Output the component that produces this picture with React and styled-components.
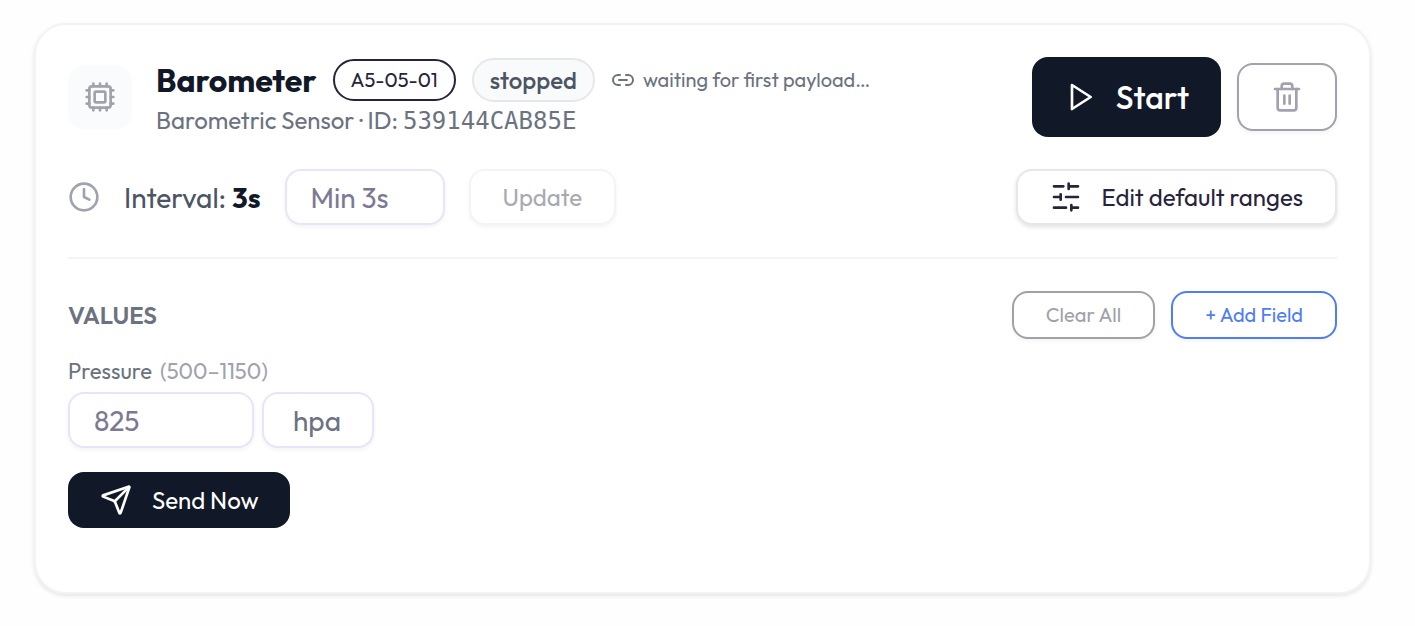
import { useState } from "react";
import styled, { createGlobalStyle } from "styled-components";
import { Cpu, Link2, Send, Trash2 } from "lucide-react";

const GlobalStyle = createGlobalStyle`
  * {
    box-sizing: border-box;
  }
  body {
    margin: 0;
    background-color: #fefefe;
    color: #111827;
    font-family: Outfit, Lato, sans-serif;
  }
  button,
  input,
  select {
    font-family: inherit;
    margin: 0;
  }
`;

function PlayIcon() {
  return (
    <Stroke viewBox="0 0 24 24">
      <polygon points="6 3 20 12 6 21 6 3" />
    </Stroke>
  );
}

function ClockIcon() {
  return (
    <Stroke viewBox="0 0 24 24">
      <circle cx="12" cy="12" r="10" />
      <polyline points="12 6 12 12 16 14" />
    </Stroke>
  );
}

function SlidersIcon() {
  return (
    <Stroke viewBox="0 0 24 24">
      <path d="M21 4h-7M10 4H3M21 12h-9M8 12H3M21 20h-5M12 20H3M14 2v4M8 10v4M16 18v4" />
    </Stroke>
  );
}

export default function App() {
  const [interval, setIntervalValue] = useState("");
  const [pressure, setPressure] = useState("");
  const [unit, setUnit] = useState("hpa");

  return (
    <>
      <GlobalStyle />
      <Card>
        <Row>
          <Device>
            <Tile>
              <Cpu size={32} />
            </Tile>
            <div>
              <TitleRow>
                <h2>Barometer</h2>
                <Badge>A5-05-01</Badge>
                <Status>stopped</Status>
                <Waiting>
                  <Link2 size={24} />
                  waiting for first payload…
                </Waiting>
              </TitleRow>
              <Subtitle>
                Barometric Sensor · ID: <code>539144CAB85E</code>
              </Subtitle>
            </div>
          </Device>
          <Actions>
            <StartButton type="button">
              <PlayIcon />
              Start
            </StartButton>
            <DeleteButton type="button" aria-label="Delete">
              <Trash2 size={32} />
            </DeleteButton>
          </Actions>
        </Row>
        <Row>
          <Interval>
            <ClockIcon />
            <label htmlFor="interval">
              Interval: <b>3s</b>
            </label>
            <TextInput
              id="interval"
              $width="160px"
              placeholder="Min 3s"
              value={interval}
              onChange={(e) => setIntervalValue(e.target.value)}
            />
            <UpdateButton type="button" disabled>
              Update
            </UpdateButton>
          </Interval>
          <EditButton type="button">
            <SlidersIcon />
            Edit default ranges
          </EditButton>
        </Row>
        <Divider />
        <Row>
          <h3>VALUES</h3>
          <Actions>
            <SmallButton type="button" $color="#a1a1aa">
              Clear All
            </SmallButton>
            <SmallButton type="button" $color="#4f7df3">
              + Add Field
            </SmallButton>
          </Actions>
        </Row>
        <Field>
          <label htmlFor="pressure">
            Pressure <span>(500–1150)</span>
          </label>
          <FieldInputs>
            <TextInput
              id="pressure"
              $width="186px"
              placeholder="825"
              value={pressure}
              onChange={(e) => setPressure(e.target.value)}
            />
            <UnitSelect
              aria-label="Unit"
              value={unit}
              onChange={(e) => setUnit(e.target.value)}
            >
              <option>hpa</option>
            </UnitSelect>
          </FieldInputs>
        </Field>
        <SendButton type="button">
          <Send size={32} />
          Send Now
        </SendButton>
      </Card>
    </>
  );
}

const Stroke = styled.svg`
  width: 32px;
  height: 32px;
  flex-shrink: 0;
  fill: none;
  stroke: currentColor;
  stroke-width: 2;
  stroke-linecap: round;
  stroke-linejoin: round;
`;

const Card = styled.section`
  margin: 23px 44px 32px 34px;
  padding: 32px 32px 64px;
  border: 2px solid #f3f3f4;
  border-radius: 32px;
  background-color: white;
  box-shadow: 0 2px 4px rgba(0, 0, 0, 0.1);
  h2 {
    margin: 0;
    font-size: 32px;
    font-weight: 700;
    line-height: 44px;
  }
  h3 {
    margin: 0;
    font-size: 24px;
    font-weight: 600;
    color: #6b7280;
  }
`;

const Row = styled.div`
  display: flex;
  align-items: center;
  justify-content: space-between;
  & + & {
    margin-top: 32px;
  }
`;

const Device = styled.div`
  display: flex;
  align-items: center;
  gap: 24px;
`;

const Tile = styled.div`
  display: flex;
  align-items: center;
  justify-content: center;
  width: 64px;
  height: 64px;
  border-radius: 16px;
  background-color: #f9fbfc;
  color: #a0a2ae;
`;

const TitleRow = styled.div`
  display: flex;
  align-items: center;
  gap: 16px;
  height: 44px;
`;

const Badge = styled.span`
  padding: 0 16px;
  border: 2px solid #27233b;
  border-radius: 21px;
  font-size: 20px;
  line-height: 38px;
  color: #27233b;
`;

const Status = styled.span`
  padding: 0 16px;
  border: 2px solid #e5e7eb;
  border-radius: 22px;
  background-color: #f9fafb;
  font-size: 24px;
  font-weight: 500;
  line-height: 40px;
  color: #4b5563;
`;

const Waiting = styled.span`
  display: flex;
  align-items: center;
  gap: 8px;
  font-size: 20px;
  color: #6b7280;
`;

const Subtitle = styled.div`
  margin-top: 2px;
  font-size: 24px;
  line-height: 32px;
  color: #6b7280;
  code {
    font-family: "DejaVu Sans Mono", monospace;
    font-size: 24px;
  }
`;

const Actions = styled.div`
  display: flex;
  align-items: center;
  gap: 16px;
`;

const Button = styled.button`
  display: flex;
  align-items: center;
  justify-content: center;
  gap: 20px;
  height: 56px;
  padding: 0 32px;
  border: 2px solid #e5e7eb;
  border-radius: 16px;
  background-color: white;
  font-size: 24px;
  color: #27233b;
  cursor: pointer;
`;

const StartButton = styled(Button)`
  height: 80px;
  border: none;
  background-color: #111827;
  font-size: 32px;
  font-weight: 500;
  color: white;
`;

const DeleteButton = styled(Button)`
  height: 68px;
  border-color: #a1a1b0;
  color: #a1a1b0;
  box-shadow: 0 2px 4px rgba(0, 0, 0, 0.05);
`;

const Interval = styled.div`
  display: flex;
  align-items: center;
  gap: 24px;
  font-size: 28px;
  color: #4b5563;
  svg {
    color: #a0a2ae;
  }
  b {
    font-weight: 700;
    color: #111827;
  }
`;

const TextInput = styled.input`
  width: ${(props) => props.$width};
  height: 56px;
  padding: 0 24px;
  border: 2px solid #e8e4fb;
  border-radius: 16px;
  background-color: white;
  font-size: 28px;
  color: #27233b;
  box-shadow: 0 2px 4px rgba(0, 0, 0, 0.05);
  &::placeholder {
    color: #7d7993;
  }
`;

const UpdateButton = styled(Button)`
  border-color: #f4f4f5;
  color: #a9a9b0;
  box-shadow: 0 2px 4px rgba(0, 0, 0, 0.05);
`;

const EditButton = styled(Button)`
  box-shadow: 0 2px 4px rgba(0, 0, 0, 0.12);
`;

const Divider = styled.hr`
  height: 2px;
  margin: 32px 0;
  border: none;
  background-color: #f3f4f6;
`;

const SmallButton = styled(Button)`
  height: 48px;
  padding-bottom: 2px;
  border-color: ${(props) => props.$color};
  font-size: 20px;
  color: ${(props) => props.$color};
  box-shadow: 0 2px 4px rgba(0, 0, 0, 0.05);
`;

const Field = styled.div`
  margin: 16px 0 24px;
  label {
    display: flex;
    gap: 8px;
    margin-bottom: 5px;
    font-size: 22px;
    line-height: 32px;
    color: #6b7280;
  }
  label span {
    color: #a0a2ae;
  }
`;

const FieldInputs = styled.div`
  display: flex;
  gap: 8px;
`;

const UnitSelect = styled.select`
  appearance: none;
  width: 112px;
  height: 56px;
  padding: 0 29px;
  border: 2px solid #e8e4fb;
  border-radius: 16px;
  background-color: white;
  font-size: 28px;
  color: #6b7280;
  box-shadow: 0 2px 4px rgba(0, 0, 0, 0.05);
`;

const SendButton = styled(Button)`
  border: none;
  background-color: #111827;
  color: white;
`;
